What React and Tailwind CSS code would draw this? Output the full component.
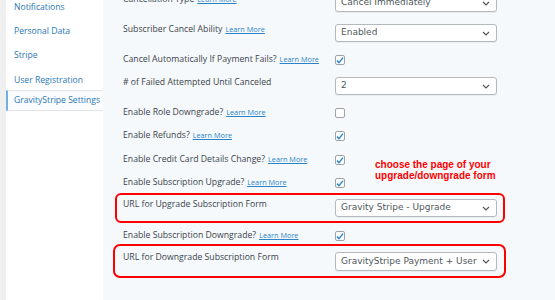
import React from 'react';

const Chevron = () => (
  <svg width="8" height="5" viewBox="0 0 8 5" className="shrink-0 ml-[3px]">
    <path d="M1 1l3 3 3-3" fill="none" stroke="#50575e" strokeWidth="1.2" />
  </svg>
);

const Select = ({ value, h = 'h-[18px]' }) => (
  <div className={`w-[162px] ${h} bg-white border border-[#b4b9be] rounded-[3px] flex items-center justify-between pl-[5px] pr-[6px] shadow-[0_1px_1px_rgba(0,0,0,0.05)]`}>
    <span className="text-[9px] text-[#50575e] whitespace-nowrap overflow-hidden" style={{ fontFamily: '"DejaVu Sans", Verdana, sans-serif' }}>{value}</span>
    <Chevron />
  </div>
);

const Check = ({ on }) => (
  <div className="w-[10px] h-[10px] bg-white border border-[#9ca2a7] rounded-[2px] flex items-center justify-center">
    {on && (
      <svg width="8" height="7" viewBox="0 0 8 7">
        <path d="M1 3.6l2 2 4-5" fill="none" stroke="#2e8bcf" strokeWidth="1.5" />
      </svg>
    )}
  </div>
);

const Learn = () => <span className="text-[7.3px] text-[#2a83c6] underline ml-[3px]">Learn More</span>;

const Row = ({ label, learn, control, mt, check }) => (
  <div className={`flex items-start ${mt}`}>
    <div className={`w-[212px] text-[8.7px] leading-[12px] text-[#3c434a] whitespace-nowrap ${check ? 'mt-[-2px]' : 'mt-[-1px]'}`}>
      {label}{learn && <Learn />}
    </div>
    {control}
  </div>
);

export default function App() {
  const side = ['Notifications', 'Personal Data', 'Stripe', 'User Registration'];
  return (
    <div className="relative w-[555px] h-[300px] overflow-hidden flex bg-[#f5f9fc]" style={{ fontFamily: '"Open Sans", "Noto Sans", sans-serif' }}>
      <div className="w-[6px] bg-[#f0f0f1]" />
      <div className="w-[97px] bg-white flex flex-col text-[8.6px] text-[#2a77b5] whitespace-nowrap">
        <div className="mt-[-5px]">
          {side.map(s => (
            <div key={s} className="h-[24.3px] flex items-center pl-[8px]">{s}</div>
          ))}
        </div>
        <div className="h-[21px] mt-[-2px] flex items-center pl-[6px] border-l-[2px] border-[#72aee6] border-y border-y-[#e2e4e7] bg-[#fbfcfd]">GravityStripe Settings</div>
      </div>
      <div className="flex-1 pl-[20px] flex flex-col mt-[-6px]">
        <Row label="Cancellation Type" learn control={<Select value="Cancel Immediately" />} mt="mt-0" />
        <Row label="Subscriber Cancel Ability" learn control={<Select value="Enabled" />} mt="mt-[12px]" />
        <Row label="Cancel Automatically If Payment Fails?" learn check control={<Check on />} mt="mt-[13px]" />
        <Row label="# of Failed Attempted Until Canceled" control={<Select value="2" />} mt="mt-[12px]" />
        <Row label="Enable Role Downgrade?" learn check control={<Check />} mt="mt-[13px]" />
        <Row label="Enable Refunds?" learn check control={<Check on />} mt="mt-[13px]" />
        <Row label="Enable Credit Card Details Change?" learn check control={<Check on />} mt="mt-[14px]" />
        <Row label="Enable Subscription Upgrade?" learn check control={<Check on />} mt="mt-[13px]" />
        <Row label="URL for Upgrade Subscription Form" control={<Select value="Gravity Stripe - Upgrade" />} mt="mt-[11px]" />
        <Row label="Enable Subscription Downgrade?" learn check control={<Check on />} mt="mt-[14px]" />
        <Row label="URL for Downgrade Subscription Form" control={<Select value="GravityStripe Payment + User Registration" h="h-[19px]" />} mt="mt-[11px]" />
      </div>

      <div className="absolute left-[375px] top-[159px] text-[10px] leading-[11px] font-bold text-[#ff0000]" style={{ fontFamily: '"Liberation Sans", Arial, sans-serif' }}>
        <div>choose the page of your</div>
        <div>upgrade/downgrade form</div>
      </div>
      <div className="absolute left-[115px] top-[193px] w-[390px] h-[30px] border-[2.5px] border-[#ff0000] rounded-[6px]" />
      <div className="absolute left-[113px] top-[244px] w-[393px] h-[34px] border-[2.5px] border-[#ff0000] rounded-[7px]" />
    </div>
  );
}
